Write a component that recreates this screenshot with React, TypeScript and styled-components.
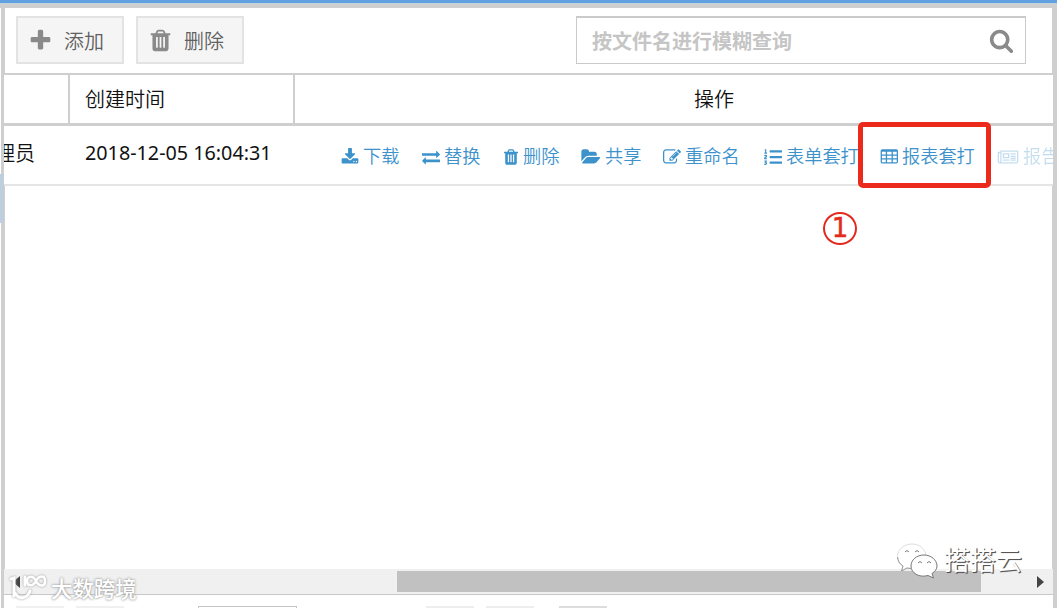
import React from 'react';
import styled, { createGlobalStyle } from 'styled-components';
import { FaListOl } from 'react-icons/fa';

const Global = createGlobalStyle`
  * { box-sizing: border-box; }
  body { margin: 0; background: #fff; overflow: hidden; }
`;

const ICONS = {
  plus: 'M1600 736v192q0 40-28 68t-68 28h-416v416q0 40-28 68t-68 28h-192q-40 0-68-28t-28-68v-416h-416q-40 0-68-28t-28-68v-192q0-40 28-68t68-28h416v-416q0-40 28-68t68-28h192q40 0 68 28t28 68v416h416q40 0 68 28t28 68z',
  search: 'M1216 832q0-185-131.5-316.5t-316.5-131.5-316.5 131.5-131.5 316.5 131.5 316.5 316.5 131.5 316.5-131.5 131.5-316.5zm512 832q0 52-38 90t-90 38q-54 0-90-38l-343-342q-179 124-399 124-143 0-273.5-55.5t-225-150-150-225-55.5-273.5 55.5-273.5 150-225 225-150 273.5-55.5 273.5 55.5 225 150 150 225 55.5 273.5q0 220-124 399l343 343q37 37 37 90z',
  trash: 'M704 1376v-704q0-14-9-23t-23-9h-64q-14 0-23 9t-9 23v704q0 14 9 23t23 9h64q14 0 23-9t9-23zm256 0v-704q0-14-9-23t-23-9h-64q-14 0-23 9t-9 23v704q0 14 9 23t23 9h64q14 0 23-9t9-23zm256 0v-704q0-14-9-23t-23-9h-64q-14 0-23 9t-9 23v704q0 14 9 23t23 9h64q14 0 23-9t9-23zm-544-992h448l-48-117q-7-9-17-11h-317q-10 2-17 11zm928 32v64q0 14-9 23t-23 9h-96v948q0 83-47 143.5t-113 60.5h-832q-66 0-113-58.5t-47-141.5v-952h-96q-14 0-23-9t-9-23v-64q0-14 9-23t23-9h309l70-167q15-37 54-63t79-26h320q40 0 79 26t54 63l70 167h309q14 0 23 9t9 23z',
  download: 'M1344 1344q0-26-19-45t-45-19-45 19-19 45 19 45 45 19 45-19 19-45zm256 0q0-26-19-45t-45-19-45 19-19 45 19 45 45 19 45-19 19-45zm128-224v320q0 40-28 68t-68 28h-1472q-40 0-68-28t-28-68v-320q0-40 28-68t68-28h465l135 136q58 56 136 56t136-56l136-136h464q40 0 68 28t28 68zm-325-569q17 41-14 70l-448 448q-18 19-45 19t-45-19l-448-448q-31-29-14-70 17-39 59-39h256v-448q0-26 19-45t45-19h256q26 0 45 19t19 45v448h256q42 0 59 39z',
  exchange: 'M1792 1184v192q0 13-9.5 22.5t-22.5 9.5h-1376v192q0 13-9.5 22.5t-22.5 9.5q-12 0-24-10l-319-320q-9-9-9-22 0-14 9-23l320-320q9-9 23-9 13 0 22.5 9.5t9.5 22.5v192h1376q13 0 22.5 9.5t9.5 22.5zm0-544q0 14-9 23l-320 320q-9 9-23 9-13 0-22.5-9.5t-9.5-22.5v-192h-1376q-13 0-22.5-9.5t-9.5-22.5v-192q0-13 9.5-22.5t22.5-9.5h1376v-192q0-14 9-23t23-9q12 0 24 10l319 319q9 9 9 23z',
  folder: 'M1815 952q0 31-31 66l-336 396q-43 51-120.5 86.5t-143.5 35.5h-1088q-34 0-60.5-13t-26.5-43q0-31 31-66l336-396q43-51 120.5-86.5t143.5-35.5h1088q34 0 60.5 13t26.5 43zm-343-344v160h-832q-94 0-197 47.5t-164 119.5l-337 396-5 6q0-4-.5-12.5t-.5-12.5v-960q0-92 66-158t158-66h320q92 0 158 66t66 158v32h544q92 0 158 66t66 158z',
  edit: 'M888 1184l116-116-152-152-116 116v56h96v96h56zm440-720q-16-16-33 1l-350 350q-17 17-1 33t33-1l350-350q17-17 1-33zm80 594v190q0 119-84.5 203.5t-203.5 84.5h-832q-119 0-203.5-84.5t-84.5-203.5v-832q0-119 84.5-203.5t203.5-84.5h832q63 0 117 25 15 7 18 23 3 17-9 29l-49 49q-14 14-32 8-23-6-45-6h-832q-66 0-113 47t-47 113v832q0 66 47 113t113 47h832q66 0 113-47t47-113v-126q0-13 9-22l64-64q15-15 35-7t20 29zm-96-738l288 288-672 672h-288v-288zm444 132l-92 92-288-288 92-92q28-28 68-28t68 28l152 152q28 28 28 68t-28 68z',
  table: 'M224 128H1632Q1792 128 1792 288V1376Q1792 1536 1632 1536H224Q64 1536 64 1376V288Q64 128 224 128ZM192 384V640H576V384ZM704 384V640H1152V384ZM1280 384V640H1664V384ZM192 768V1024H576V768ZM704 768V1024H1152V768ZM1280 768V1024H1664V768ZM192 1152V1408H576V1152ZM704 1152V1408H1152V1152ZM1280 1152V1408H1664V1152Z',
  news: 'M256 256H2048V1344Q2048 1536 1856 1536H192Q0 1536 0 1344V384H256ZM384 384V1344Q384 1390 370 1408H1856Q1920 1408 1920 1344V384ZM128 512V1344Q128 1408 192 1408T256 1344V512ZM512 512H1152V1024H512ZM640 640V896H1024V640ZM512 1152H1152V1280H512ZM1280 512H1792V640H1280ZM1280 768H1792V896H1280ZM1280 1152H1792V1280H1280ZM1280 960H1792V1088H1280Z',
};

const Glyph = styled.svg`
  flex: none;
  display: block;
  fill: currentColor;
  fill-rule: evenodd;
`;

type IconName = keyof typeof ICONS;

const Icon = ({ name, w = 18, h = 18, box = '0 0 1792 1792' }: { name: IconName; w?: number; h?: number; box?: string }) => (
  <Glyph width={w} height={h} viewBox={box}>
    <path d={ICONS[name]} />
  </Glyph>
);

const Page = styled.div`
  position: relative;
  display: flex;
  flex-direction: column;
  width: 1057px;
  height: 608px;
  overflow: hidden;
  font-family: 'Noto Sans', 'Noto Sans CJK SC', sans-serif;
  font-weight: 350;
  color: #111;
`;

const TopBar = styled.div`
  flex: none;
  height: 8px;
  background: linear-gradient(#63a0df 0 3px, #bdd5dc 3px 4px, #cfcfcf 4px);
`;

const Body = styled.div`
  flex: 1;
  min-height: 0;
  display: flex;
`;

const LeftEdge = styled.div`
  flex: none;
  width: 4px;
  padding-top: 166px;
  border-right: 3px solid #cfcfcf;
`;

const SideMark = styled.div`
  width: 4px;
  height: 49px;
  background: #bfcedc;
`;

const Panel = styled.div`
  flex: 1;
  min-width: 0;
  display: flex;
  flex-direction: column;
  border-right: 4px solid #cfcfcf;
`;

const Toolbar = styled.div`
  flex: none;
  height: 67px;
  display: flex;
  align-items: flex-start;
  gap: 12px;
  padding: 8px 26px 0 11px;
  border: solid #cfcfcf;
  border-width: 0 1px 2px;
`;

const ToolButton = styled.div`
  width: 108px;
  height: 48px;
  display: flex;
  align-items: center;
  gap: 11px;
  padding: 0 0 0 10px;
  border: 2px solid #e3e3e3;
  background: #f5f5f5;
  color: #8a8a8a;
  font-size: 20px;
  line-height: 30px;
  span { padding-top: 3px; color: #606060; }
`;

const SearchBox = styled.div`
  width: 450px;
  height: 48px;
  margin-left: auto;
  display: flex;
  align-items: center;
  justify-content: space-between;
  padding: 0 11px 0 15px;
  border: 1px solid #cacaca;
  border-top-width: 2px;
  color: #8a8a8a;
  font-size: 20px;
  span { color: #c5c5c5; font-weight: 700; }
`;

const HeadRow = styled.div`
  flex: none;
  height: 51px;
  display: flex;
  border-bottom: 3px solid #cfcfcf;
`;

const HeadCell = styled.div<{ $w?: number; $center?: boolean }>`
  ${({ $w }) => ($w ? `width: ${$w}px; border-right: 2px solid #cfcfcf;` : 'flex: 1;')}
  padding-left: ${({ $center }) => ($center ? 80 : 15)}px;
  text-align: ${({ $center }) => ($center ? 'center' : 'left')};
  font-size: 20px;
  line-height: 49px;
`;

const DataRow = styled.div`
  flex: none;
  height: 60px;
  display: flex;
  overflow: hidden;
  border-bottom: 2px solid #e5e5e5;
  font-size: 20px;
  line-height: 55px;
  white-space: nowrap;
`;

const OwnerCell = styled.div`
  width: 66px;
  display: flex;
  justify-content: flex-end;
  padding-right: 35px;
  overflow: hidden;
`;

const TimeCell = styled.div`
  width: 225px;
  padding-left: 15px;
  font-size: 19.75px;
  font-weight: 400;
  line-height: 53px;
`;

const Actions = styled.div`
  flex: 1;
  min-width: 0;
  display: flex;
  padding-left: 46px;
  overflow: hidden;
`;

const Action = styled.div<{ $w: number; $faded?: boolean }>`
  flex: none;
  width: ${({ $w }) => $w}px;
  display: flex;
  align-items: center;
  gap: 4px;
  height: 61px;
  color: #3d92cb;
  font-size: 18.2px;
  line-height: 61px;
  opacity: ${({ $faded }) => ($faded ? 0.3 : 1)};
`;

const Empty = styled.div`
  flex: 1;
  border: solid #cfcfcf;
  border-width: 0 1px;
`;

const ScrollBar = styled.div`
  flex: none;
  height: 26px;
  display: flex;
  align-items: center;
  justify-content: space-between;
  padding: 0 9px;
  background: #f0f0f0;
  border-bottom: 1px solid #c8c8c8;
`;

const Track = styled.div`
  flex: 1;
  height: 21px;
  padding-left: 377px;
`;

const Thumb = styled.div`
  width: 584px;
  height: 21px;
  background: #c1c1c1;
`;

const Pager = styled.div`
  flex: none;
  height: 13px;
  display: flex;
  align-items: flex-end;
  padding-left: 12px;
`;

const PagerPart = styled.div<{ $w: number; $gap?: number; $color: string }>`
  width: ${({ $w }) => $w}px;
  height: 2px;
  margin-right: ${({ $gap = 0 }) => $gap}px;
  background: ${({ $color }) => $color};
`;

const PagerInput = styled.div`
  width: 99px;
  height: 2px;
  margin-right: 129px;
  border: 1px solid #c4c4c4;
  border-bottom: 0;
`;

const Highlight = styled.div`
  position: absolute;
  left: 858px;
  top: 122px;
  width: 133px;
  height: 66px;
  border: 5px solid #ec2a1c;
  border-radius: 5px;
`;

const Step = styled.div`
  position: absolute;
  left: 823px;
  top: 212px;
  width: 34px;
  height: 33px;
  border: 2px solid #e5281c;
  border-radius: 50%;
  color: #e5281c;
  font: 400 26px/29px 'DejaVu Sans', sans-serif;
  -webkit-text-stroke: 0.4px #e5281c;
  text-align: center;
`;

const CloudMark = styled.div`
  position: absolute;
  left: 896px;
  top: 540px;
  display: flex;
  align-items: center;
  gap: 6px;
  color: #fff;
  font-size: 26px;
  font-weight: 400;
  line-height: 40px;
  text-shadow: 1px 1px 0 #555, 1px 1px 1px #777;
`;

const SiteMark = styled.div`
  position: absolute;
  left: 9px;
  top: 572px;
  display: flex;
  align-items: center;
  gap: 4px;
  height: 31px;
  color: #fff;
  font-size: 21.4px;
  font-weight: 500;
  text-shadow: 0 0 2px #999, 0 0 3px #aaa;
  svg { filter: drop-shadow(0 0 1px #999); }
`;

const App = () => (
  <>
    <Global />
    <Page>
      <TopBar />
      <Body>
        <LeftEdge><SideMark /></LeftEdge>
        <Panel>
          <Toolbar>
            <ToolButton><Icon name="plus" w={25} h={25} /><span>添加</span></ToolButton>
            <ToolButton><Icon name="trash" w={25} h={25} /><span>删除</span></ToolButton>
            <SearchBox><span>按文件名进行模糊查询</span><Icon name="search" w={25} h={25} /></SearchBox>
          </Toolbar>
          <HeadRow>
            <HeadCell $w={66} />
            <HeadCell $w={225}>创建时间</HeadCell>
            <HeadCell $center>操作</HeadCell>
          </HeadRow>
          <DataRow>
            <OwnerCell>管理员</OwnerCell>
            <TimeCell>2018-12-05 16:04:31</TimeCell>
            <Actions>
              <Action $w={81}><Icon name="download" />下载</Action>
              <Action $w={81}><Icon name="exchange" />替换</Action>
              <Action $w={78}><Icon name="trash" w={16} box="100 0 1592 1792" />删除</Action>
              <Action $w={82}><Icon name="folder" w={20} />共享</Action>
              <Action $w={101}><Icon name="edit" />重命名</Action>
              <Action $w={116}><FaListOl size={18} />表单套打</Action>
              <Action $w={117}><Icon name="table" />报表套打</Action>
              <Action $w={120} $faded><Icon name="news" w={22} box="0 0 2048 1792" />报告套打</Action>
            </Actions>
          </DataRow>
          <Empty />
          <ScrollBar>
            <Glyph width="7" height="12" viewBox="0 0 7 12" color="#444"><path d="M7 0V12L0 6Z" /></Glyph>
            <Track><Thumb /></Track>
            <Glyph width="7" height="12" viewBox="0 0 7 12" color="#444"><path d="M0 0V12L7 6Z" /></Glyph>
          </ScrollBar>
          <Pager>
            <PagerPart $w={48} $gap={12} $color="#f0f0f0" />
            <PagerPart $w={48} $gap={74} $color="#f0f0f0" />
            <PagerInput />
            <PagerPart $w={48} $gap={12} $color="#eeeeee" />
            <PagerPart $w={48} $gap={25} $color="#eeeeee" />
            <PagerPart $w={48} $color="#dddddd" />
          </Pager>
        </Panel>
      </Body>
      <Highlight />
      <Step>1</Step>
      <CloudMark>
        <svg width="42" height="38" viewBox="0 0 42 38" fill="#fff" stroke="#777" strokeWidth="1">
          <path stroke="#ddd" d="M16 3C8 3 1.500 8.500 1.500 15.500C1.500 19.500 3.500 23 7 25L5.500 30L11 27C21 30 30 23 30 15.500C30 8.500 24 3 16 3Z" />
          <path stroke="#999" fill="none" d="M1.500 16C2 20 3.500 23 7 25L5.500 30L11 27L15 27.500" />
          <path d="M28 14C20.500 14 15 19 15 25C15 32 23 37 32 34.500L37.500 37L36 32.500C39 30.500 41 28 41 25C41 19 35 14 28 14Z" />
          <path fill="none" d="M9 11Q11 8 13 11M19 11Q21 8 23 11M22 22Q24 19 26 22M31 22Q33 19 35 22" />
        </svg>
        搭搭云
      </CloudMark>
      <SiteMark>
        <svg width="38" height="28" viewBox="0 0 38 28" fill="none" stroke="#fff" strokeWidth="3" strokeLinecap="round">
          <path d="M2 5L5 4V22M6 19Q10 26 16 23Q20 21 21 17M16 3V11" />
          <path d="M27 7C24 1 18 2 18 7S24 13 27 7S36 1 36 7S30 13 27 7Z" strokeWidth="2.500" />
        </svg>
        大数跨境
      </SiteMark>
    </Page>
  </>
);

export default App;
